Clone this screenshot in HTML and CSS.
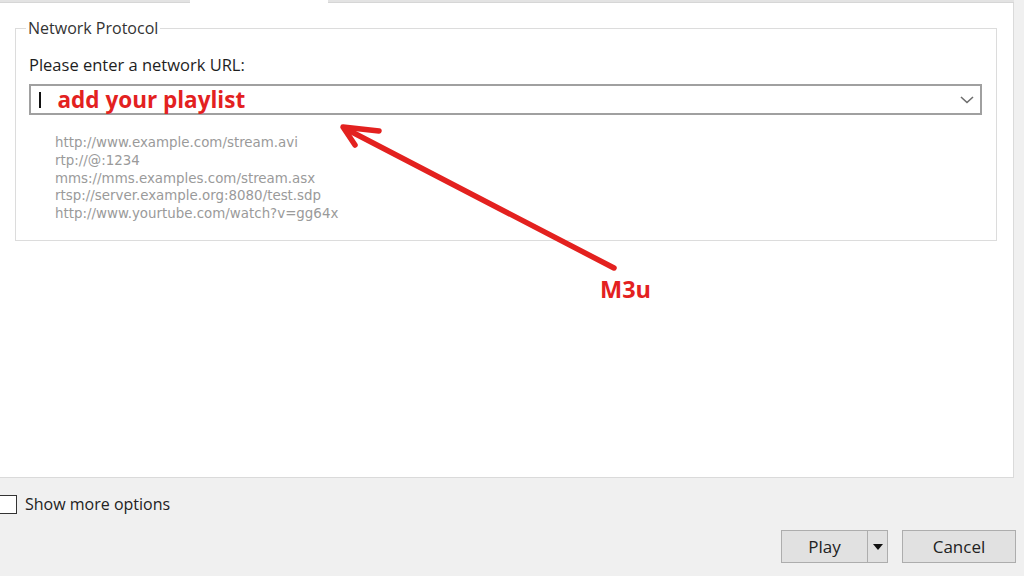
FILE: index.html
```html
<!DOCTYPE html>
<html>
<head>
<meta charset="utf-8">
<link rel="stylesheet" href="styles.css">
</head>
<body>
<div class="tabstrip">
  <div class="tabline tab-left"></div>
  <div class="tab-active"></div>
  <div class="tabline tab-right"></div>
</div>
<div class="panel">
  <fieldset class="group">
    <legend class="group-title">Network Protocol</legend>
    <div class="field-label">Please enter a network URL:</div>
    <div class="combo">
      <span class="caret"></span>
      <span class="combo-text">add your playlist</span>
      <svg class="chevron" width="14" height="8" viewBox="0 0 14 8"><path d="M1 1 L7 6.5 L13 1" fill="none" stroke="#6d6d6d" stroke-width="1.6"/></svg>
    </div>
    <div class="examples">
      <div>http://www.example.com/stream.avi</div>
      <div>rtp://@:1234</div>
      <div>mms://mms.examples.com/stream.asx</div>
      <div>rtsp://server.example.org:8080/test.sdp</div>
      <div>http://www.yourtube.com/watch?v=gg64x</div>
    </div>
  </fieldset>
  <svg class="annotation" width="1014" height="320" viewBox="0 0 1014 320">
    <line x1="614" y1="268" x2="348" y2="130" stroke="#e3211f" stroke-width="5.5" stroke-linecap="round"/>
    <path d="M379 131 L343 127 L355 145" fill="none" stroke="#e3211f" stroke-width="5.5" stroke-linecap="round" stroke-linejoin="round"/>
  </svg>
  <div class="note">M3u</div>
</div>
<div class="bottom">
  <label class="check-row"><span class="checkbox"></span><span class="check-label">Show more options</span></label>
  <div class="buttons">
    <div class="btn btn-play"><span class="btn-main">Play</span><span class="btn-split"><svg width="10" height="6" viewBox="0 0 10 6"><path d="M0 0 L10 0 L5 6 Z" fill="#111"/></svg></span></div>
    <div class="btn btn-cancel">Cancel</div>
  </div>
</div>
</body>
</html>
```
FILE: styles.css
```css
html, body {
  margin: 0;
  padding: 0;
}
body {
  width: 1024px;
  height: 576px;
  overflow: hidden;
  background: #f0f0f0;
  font-family: "Open Sans", "Noto Sans", sans-serif;
  color: #222;
}
.tabstrip {
  display: flex;
  width: 1014px;
  height: 3px;
}
.tabline {
  background: #e3e3e3;
  border-bottom: 1px solid #d6d6d6;
  box-sizing: border-box;
}
.tab-left { width: 190px; }
.tab-active { width: 138px; background: #fff; }
.tab-right { flex: 1; }
.panel {
  position: relative;
  width: 998px;
  height: 459px;
  background: #fff;
  border-right: 1px solid #dadada;
  border-bottom: 1px solid #dadada;
  padding: 15px 0 0 15px;
}
.group {
  margin: 0;
  width: 982px;
  height: 223px;
  box-sizing: border-box;
  border: 1px solid #dcdcdc;
  padding: 0 0 0 13px;
}
.group-title {
  padding: 0 2px;
  margin-left: -3px;
  font-size: 16px;
  line-height: 20px;
  color: #333;
}
.field-label {
  margin-top: 17px;
  font-size: 16.5px;
  line-height: 20px;
  color: #1e1e1e;
}
.combo {
  margin-top: 9px;
  width: 953px;
  height: 31px;
  box-sizing: border-box;
  border: 2px solid #a0a0a0;
  display: flex;
  align-items: center;
  padding-left: 8px;
}
.caret {
  width: 1.5px;
  height: 16px;
  background: #111;
}
.combo-text {
  margin-left: 17px;
  font-family: "Open Sans", sans-serif;
  font-weight: 700;
  font-size: 22.5px;
  color: #e3211f;
  line-height: 26px;
}
.chevron {
  margin-left: auto;
  margin-right: 6px;
}
.examples {
  margin-top: 19px;
  padding-left: 26px;
  font-family: "DejaVu Sans", sans-serif;
  font-size: 13.4px;
  line-height: 17.75px;
  color: #9a9a9a;
}
.annotation {
  position: absolute;
  left: 0;
  top: -3px;
}
.note {
  position: absolute;
  left: 600px;
  top: 270px;
  font-family: "Open Sans", sans-serif;
  font-weight: 700;
  font-size: 23.5px;
  color: #e3211f;
}
.bottom {
  height: 98px;
  position: relative;
}
.check-row {
  display: flex;
  align-items: center;
  padding-top: 15px;
  margin-left: -2px;
}
.checkbox {
  width: 19px;
  height: 19px;
  box-sizing: border-box;
  border: 1.5px solid #333;
  background: #fff;
}
.check-label {
  margin-left: 8px;
  font-size: 16px;
  color: #222;
}
.buttons {
  display: flex;
  justify-content: flex-end;
  gap: 14px;
  margin-top: 15px;
  padding-right: 8px;
}
.btn {
  height: 33px;
  box-sizing: border-box;
  background: #e1e1e1;
  border: 1px solid #adadad;
  font-size: 17px;
  color: #222;
  display: flex;
  align-items: center;
}
.btn-play { width: 107px; }
.btn-main {
  flex: 1;
  text-align: center;
}
.btn-split {
  width: 19px;
  height: 100%;
  border-left: 1px solid #adadad;
  display: flex;
  align-items: center;
  justify-content: center;
}
.btn-cancel {
  width: 114px;
  justify-content: center;
}
```
